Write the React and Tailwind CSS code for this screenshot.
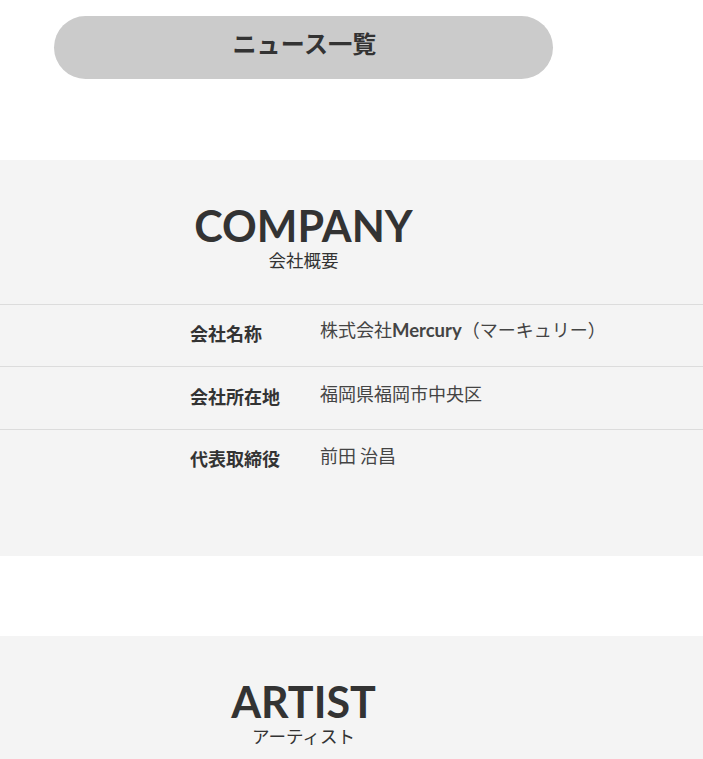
export default function App() {
  const jp = { fontFamily: '"Noto Sans CJK JP", "Noto Sans", sans-serif' };
  const lato = { fontFamily: 'Lato, "Noto Sans CJK JP", sans-serif' };
  const rows = [
    ["会社名称", (<>株式会社<span style={lato} className="font-bold text-[18.5px]">Mercury</span>（マーキュリー）</>), "h-[62px]"],
    ["会社所在地", "福岡県福岡市中央区", "h-[63px]"],
    ["代表取締役", "前田 治昌", "h-[62px]"],
  ];
  return (
    <div className="w-[703px] bg-white text-[#333]" style={jp}>
      <div className="pt-[16px] w-[607px]">
        <div className="mx-[54px] h-[63px] rounded-full bg-[#cbcbcb] flex items-center justify-center">
          <span className="text-[24px] font-bold tracking-[0.01em] pb-[9px] pl-[2px]">ニュース一覧</span>
        </div>
      </div>
      <section className="mt-[81px] bg-[#f4f4f4] pt-[36px] pb-[65px]">
        <div className="w-[607px] text-center">
          <h2 style={lato} className="text-[43px] font-bold leading-[60px]">COMPANY</h2>
          <p className="text-[17.5px] leading-[20px] -mt-[6px]">会社概要</p>
        </div>
        <div className="mt-[34px]">
          {rows.map(([k, v, h], i) => (
            <div key={i} className={`border-t border-[#dcdcdc] ${h} flex items-center pl-[190px]`}>
              <div className="w-[130px] text-[18px] font-bold pb-[4px]">{k}</div>
              <div className="text-[18px] text-[#444] pb-[10px]">{v}</div>
            </div>
          ))}
        </div>
      </section>
      <section className="mt-[80px] bg-[#f4f4f4] pt-[36px] h-[200px]">
        <div className="w-[607px] text-center">
          <h2 style={lato} className="text-[43px] font-bold leading-[60px]">ARTIST</h2>
          <p className="text-[17.5px] leading-[20px] -mt-[6px]">アーティスト</p>
        </div>
      </section>
    </div>
  );
}
